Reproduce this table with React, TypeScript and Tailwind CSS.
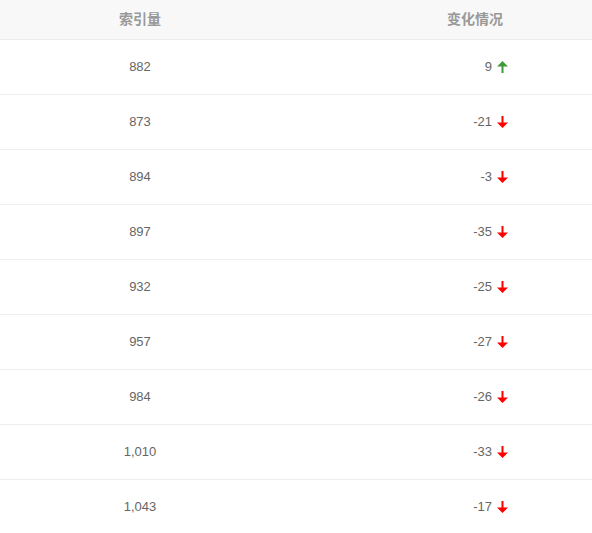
import React from "react";

const rows = [
  { count: "882", change: "9", up: true },
  { count: "873", change: "-21", up: false },
  { count: "894", change: "-3", up: false },
  { count: "897", change: "-35", up: false },
  { count: "932", change: "-25", up: false },
  { count: "957", change: "-27", up: false },
  { count: "984", change: "-26", up: false },
  { count: "1,010", change: "-33", up: false },
  { count: "1,043", change: "-17", up: false },
];

// small solid arrow used in the change column
function Arrow({ up }: { up: boolean }) {
  const color = up ? "#3f9a3a" : "#ff0000";
  return (
    <svg width="11" height="12" viewBox="0 0 11 12" className={up ? "" : "rotate-180"}>
      <path d="M5.5 0 L11 5.5 L6.5 5.5 L6.5 12 L4.5 12 L4.5 5.5 L0 5.5 Z" fill={color} />
    </svg>
  );
}

export default function App() {
  return (
    <div
      className="w-[592px] bg-white text-[13px]"
      style={{ fontFamily: '"Liberation Sans", "Noto Sans CJK SC", sans-serif' }}
    >
      <div className="flex h-[40px] items-center border-b border-[#ececec] bg-[#f8f8f8] text-[14px] font-bold text-[#999]">
        <div className="w-[280px] text-center">索引量</div>
        <div className="flex flex-1 justify-end pr-[89px]">变化情况</div>
      </div>
      {rows.map((r) => (
        <div key={r.count} className="flex h-[55px] items-center border-b border-[#eeeeee] text-[#666]">
          <div className="w-[280px] text-center">{r.count}</div>
          <div className="flex flex-1 items-center justify-end gap-[5px] pr-[84px]">
            <span>{r.change}</span>
            <Arrow up={r.up} />
          </div>
        </div>
      ))}
    </div>
  );
}
